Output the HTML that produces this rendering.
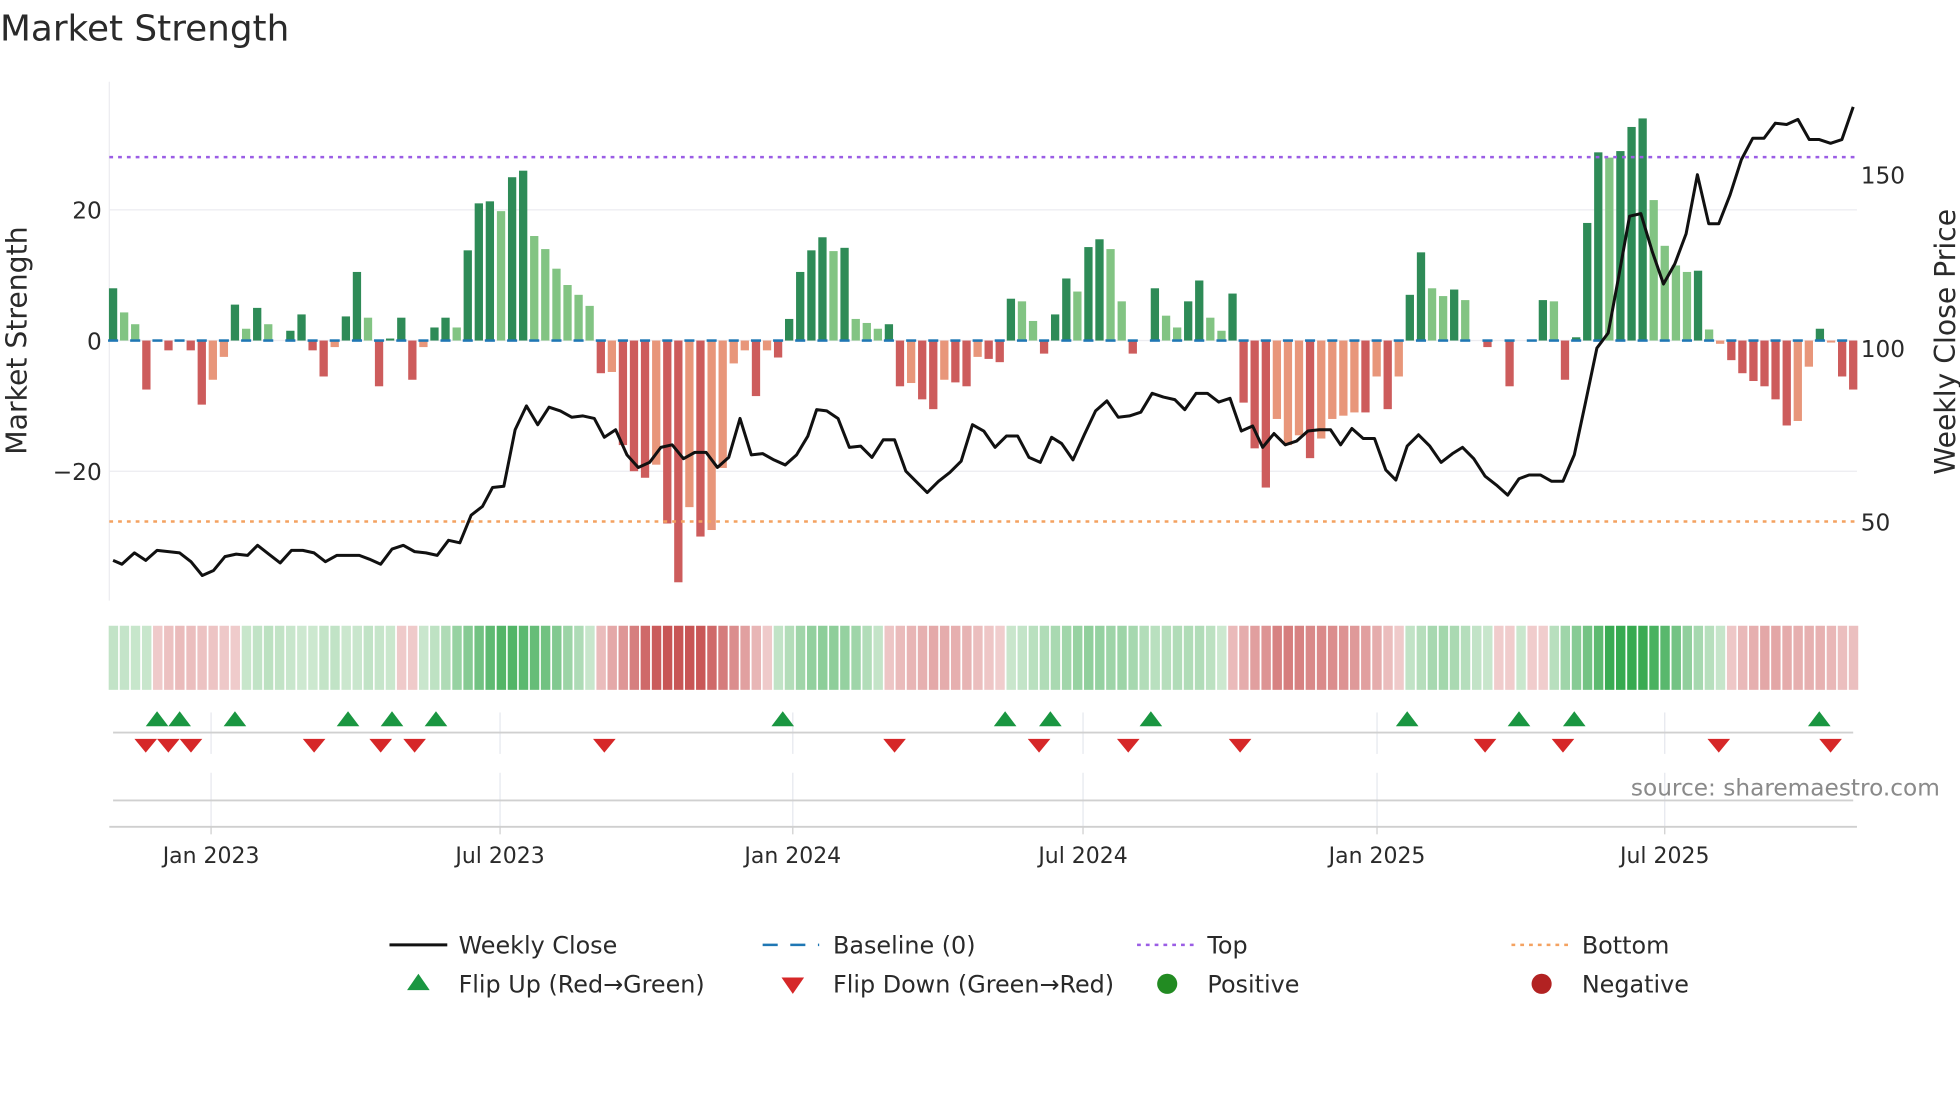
<!DOCTYPE html>
<html><head><meta charset="utf-8"><style>
html,body{margin:0;padding:0;background:#fff;width:1960px;height:1102px;overflow:hidden}
svg{display:block}
text{font-family:"DejaVu Sans","Liberation Sans",sans-serif;fill:#2a2a2a}
</style></head><body>
<svg id="s" width="1960" height="1102" viewBox="0 0 1560 877" xmlns="http://www.w3.org/2000/svg">
<text x="0" y="32" font-size="28.5" fill="#333">Market Strength</text>
<g stroke="#ececf0" stroke-width="1">
<line x1="87" y1="167" x2="1478" y2="167"/><line x1="87" y1="271" x2="1478" y2="271"/><line x1="87" y1="375" x2="1478" y2="375"/>
<line x1="87" y1="65" x2="87" y2="478"/>
</g>
<g id="bars"></g>
<line x1="87" y1="125" x2="1478" y2="125" stroke="#9b5de5" stroke-width="2" stroke-dasharray="3,4"/>
<line x1="87" y1="415" x2="1478" y2="415" stroke="#f4a261" stroke-width="2" stroke-dasharray="3,4"/>
<polyline id="price" fill="none" stroke="#111" stroke-width="2.4" stroke-linejoin="round"/>
<g font-size="18.5" text-anchor="end">
<text x="81" y="174">20</text><text x="81" y="278">0</text><text x="81" y="382">−20</text>
</g>
<g font-size="18.5">
<text x="1481" y="146">150</text><text x="1481" y="284">100</text><text x="1481" y="422">50</text>
</g>
<text transform="translate(21,271) rotate(-90)" font-size="22.5" text-anchor="middle">Market Strength</text>
<text transform="translate(1556,272) rotate(-90)" font-size="22.5" text-anchor="middle">Weekly Close Price</text>
<g id="strip"></g>
<g stroke="#e6e8ee" stroke-width="1">
<line x1="168" y1="567" x2="168" y2="600"/><line x1="398" y1="567" x2="398" y2="600"/><line x1="631" y1="567" x2="631" y2="600"/><line x1="862" y1="567" x2="862" y2="600"/><line x1="1096" y1="567" x2="1096" y2="600"/><line x1="1325" y1="567" x2="1325" y2="600"/>
<line x1="168" y1="615" x2="168" y2="658"/><line x1="398" y1="615" x2="398" y2="658"/><line x1="631" y1="615" x2="631" y2="658"/><line x1="862" y1="615" x2="862" y2="658"/><line x1="1096" y1="615" x2="1096" y2="658"/><line x1="1325" y1="615" x2="1325" y2="658"/>
</g>
<line x1="90" y1="583" x2="1475" y2="583" stroke="#d0d0d0" stroke-width="1.5"/>
<line x1="90" y1="637" x2="1475" y2="637" stroke="#d0d0d0" stroke-width="1.5"/>
<line x1="87" y1="658" x2="1478" y2="658" stroke="#cfcfcf" stroke-width="1.5"/>
<g stroke="#cfcfcf"><line x1="168" y1="658" x2="168" y2="664"/><line x1="398" y1="658" x2="398" y2="664"/><line x1="631" y1="658" x2="631" y2="664"/><line x1="862" y1="658" x2="862" y2="664"/><line x1="1096" y1="658" x2="1096" y2="664"/><line x1="1325" y1="658" x2="1325" y2="664"/></g>
<g id="mk"></g>
<g font-size="17.5" text-anchor="middle">
<text x="168" y="687">Jan 2023</text><text x="398" y="687">Jul 2023</text><text x="631" y="687">Jan 2024</text><text x="862" y="687">Jul 2024</text><text x="1096" y="687">Jan 2025</text><text x="1325" y="687">Jul 2025</text>
</g>
<text x="1544" y="633" font-size="18.5" text-anchor="end" style="fill:#8a8a8a">source: sharemaestro.com</text>
<line x1="310" y1="752" x2="356" y2="752" stroke="#111" stroke-width="2.4"/>
<line x1="607" y1="752" x2="652" y2="752" stroke="#1f77b4" stroke-width="2" stroke-dasharray="12,10"/>
<line x1="905" y1="752" x2="950" y2="752" stroke="#9b5de5" stroke-width="2" stroke-dasharray="3,4"/>
<line x1="1203" y1="752" x2="1248" y2="752" stroke="#f4a261" stroke-width="2" stroke-dasharray="3,4"/>
<polygon points="324,788 342,788 333,775" fill="#1a9641"/>
<polygon points="622,778 640,778 631,791" fill="#d62728"/>
<circle cx="929" cy="783" r="8" fill="#228b22"/>
<circle cx="1227" cy="783" r="8" fill="#b22222"/>
<g font-size="19">
<text x="365" y="759">Weekly Close</text><text x="663" y="759">Baseline (0)</text><text x="961" y="759">Top</text><text x="1259" y="759">Bottom</text>
<text x="365" y="790">Flip Up (Red→Green)</text><text x="663" y="790">Flip Down (Green→Red)</text><text x="961" y="790">Positive</text><text x="1259" y="790">Negative</text>
</g>
</svg>
<script>
var d="8D 4.3L 2.5L -7.5R 0Z -1.5R 0Z -1.5R -9.8R -6S -2.5S 5.5D 1.8L 5D 2.5L 0Z 1.5D 4D -1.5R -5.5R -1S 3.7D 10.5D 3.5L -7R 0.3D 3.5D -6R -1S 2D 3.5D 2L 13.8D 21D 21.3D 19.8L 25D 26D 16L 14L 11L 8.5L 7L 5.3L -5R -4.8S -16R -20R -21R -19S -28R -37R -25.5S -30R -29S -19.5S -3.5S -1.5S -8.5R -1.5S -2.6R 3.3D 10.5D 13.8D 15.8D 13.7L 14.2D 3.3L 2.7L 1.8L 2.5D -7R -6.5S -9R -10.5R -6S -6.4R -7R -2.5S -2.8R -3.3R 6.4D 6L 3L -2R 4D 9.5D 7.5L 14.3D 15.5D 14L 6L -2R 0Z 8D 3.8L 2L 6D 9.2D 3.5L 1.5L 7.2D -9.5R -16.5R -22.5R -12S -16S -14.5S -18R -15S -12S -11.5S -11S -11R -5.5S -10.5R -5.5S 7D 13.5D 8L 6.8L 7.8D 6.2L 0Z -1R 0Z -7R 0Z 0Z 6.2D 6L -6R 0.5D 18D 28.8D 28L 29D 32.7D 34D 21.5L 14.5L 11.5L 10.5L 10.7D 1.7L -0.5S -3R -5R -6.2R -7R -9R -13R -12.3S -4S 1.8D -0.3S -5.5R -7.5R".split(" ");
var C={D:"#2e8b57",L:"#82c483",R:"#cd5c5c",S:"#e8967a",Z:"#2e8b57"};
var N=d.length,x0=90,x1=1475,st=(x1-x0)/(N-1),h="",s="",vals=[];
d.forEach(function(t){vals.push(parseFloat(t));});
d.forEach(function(t,i){var v=vals[i],c=C[t.slice(-1)],x=x0+i*st;
 var y=v>=0?271-v*5.2:271,hh=Math.abs(v)*5.2;
 if(hh>0.3)h+='<rect x="'+(x-3.3).toFixed(1)+'" y="'+y.toFixed(1)+'" width="6.6" height="'+hh.toFixed(1)+'" fill="'+c+'"/>';
 if(i%2==0)h+='<rect x="'+(x-4).toFixed(1)+'" y="270" width="8" height="2" fill="#1f77b4"/>';
 var a=0,n=0;for(var k=i-3;k<=i+3;k++){if(k>=0&&k<N){a+=vals[k];n++;}}a/=n;
 var m=Math.min(1,Math.abs(a)/25),col;
 if(a>=0)col="rgb("+Math.round(205-150*m)+","+Math.round(232-62*m)+","+Math.round(208-128*m)+")";
 else col="rgb("+Math.round(240-40*m)+","+Math.round(205-120*m)+","+Math.round(205-120*m)+")";
 s+='<rect x="'+(x-3.5).toFixed(1)+'" y="498" width="'+(st-1.3).toFixed(1)+'" height="51" fill="'+col+'"/>';
});
document.getElementById("bars").innerHTML=h;
document.getElementById("strip").innerHTML=s;
var p="90,446 97,449 107,440 116,446 125,438 134,439 143,440 152,447 161,458 170,454 179,443 188,441 197,442 205,434 214,441 223,448 232,438 241,438 250,440 259,447 268,442 277,442 286,442 294,445 303,449 312,437 321,434 330,439 339,440 348,442 357,430 366,432 375,410 384,403 392,388 401,387 410,342 419,323 428,338 437,324 446,327 455,332 464,331 473,333 481,348 490,342 499,362 508,372 517,368 526,356 535,354 544,365 553,360 562,360 571,372 580,364 589,333 598,362 607,361 616,366 625,370 634,362 643,347 650,326 658,327 667,333 676,356 685,355 694,364 703,350 712,350 721,375 730,384 738,392 747,383 756,376 765,367 774,338 783,343 792,356 801,347 810,347 819,364 828,368 837,348 845,353 854,366 863,346 872,327 881,319 890,332 899,331 908,328 917,313 926,316 935,318 943,326 952,313 961,313 970,320 979,317 988,343 997,339 1005,356 1014,345 1023,354 1032,351 1041,343 1050,342 1059,342 1067,354 1076,341 1085,349 1094,349 1103,374 1111,382 1120,355 1129,346 1138,355 1147,368 1156,361 1164,356 1173,365 1182,379 1191,386 1200,394 1209,381 1217,378 1226,378 1235,383 1244,383 1253,362 1262,320 1271,277 1280,265 1288,222 1297,172 1306,170 1315,200 1324,226 1333,210 1342,186 1351,139 1360,178 1368,178 1377,155 1386,127 1395,110 1404,110 1413,98 1422,99 1431,95 1440,111 1448,111 1457,114 1466,111 1475,85";
document.getElementById("price").setAttribute("points",p);
var up=[125,143,187,277,312,347,623,800,836,916,1120,1209,1253,1448],dn=[116,134,152,250,303,330,481,712,827,898,987,1182,1244,1368,1457],m="";
up.forEach(function(x){m+='<polygon points="'+(x-9)+',578 '+(x+9)+',578 '+x+',566" fill="#1a9641"/>';});
dn.forEach(function(x){m+='<polygon points="'+(x-9)+',588 '+(x+9)+',588 '+x+',599" fill="#d62728"/>';});
document.getElementById("mk").innerHTML=m;
</script>
</body></html>
